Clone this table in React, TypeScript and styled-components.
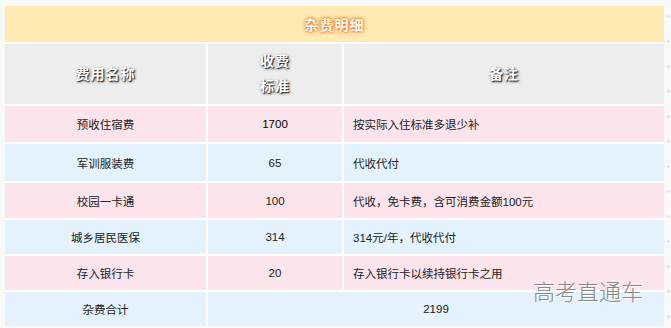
import React from 'react'
import styled, { createGlobalStyle } from 'styled-components'

const GlobalStyle = createGlobalStyle`
  body {
    margin: 0;
    background: #f9f9f9;
    font-family: 'Liberation Sans', 'Noto Sans CJK SC', sans-serif;
  }
`

const Page = styled.div`
  position: relative;
  height: 328px;
  padding: 6px 0 0 5px;
  box-sizing: border-box;
`

const Sheet = styled.div`
  display: grid;
  grid-template-columns: 201px 134px 1fr;
  gap: 2px;
  width: 659px;
  background: #fff;
`

const TitleCell = styled.div`
  grid-column: 1 / -1;
  height: 36px;
  background: #ffeab3;
  display: flex;
  align-items: center;
  justify-content: center;
  color: #fff;
  font-size: 14px;
  font-weight: 700;
  letter-spacing: 1px;
  text-shadow: 0 0 2px #ff6a00, 0 0 3px #ff7a1f, 0 0 4px #ff9a4a;
`

const HeadCell = styled.div`
  height: 60px;
  background: #ededed;
  display: flex;
  align-items: center;
  justify-content: center;
  text-align: center;
  color: #fff;
  font-size: 14px;
  font-weight: 700;
  letter-spacing: 1px;
  line-height: 25px;
  text-shadow: 1px 1px 1px #333, 1px 1px 3px #555;
`

const Cell = styled.div<{ $tone: 'pink' | 'blue'; $align?: 'left' | 'center'; $h: number; $span?: boolean }>`
  height: ${p => p.$h}px;
  background: ${p => (p.$tone === 'pink' ? '#fce4ec' : '#e3f2fd')};
  display: flex;
  align-items: center;
  justify-content: ${p => (p.$align === 'left' ? 'flex-start' : 'center')};
  padding: ${p => (p.$align === 'left' ? '0 0 0 9px' : '0')};
  grid-column: ${p => (p.$span ? '2 / -1' : 'auto')};
  color: #222;
  font-size: 11.5px;
`

const Amount = styled.span<{ $strong?: boolean }>`
  color: ${p => (p.$strong ? '#000' : '#222')};
`

const Watermark = styled.div`
  position: absolute;
  left: 533px;
  top: 274px;
  color: #888;
  font-family: 'Noto Sans CJK SC', sans-serif;
  font-size: 22px;
  font-weight: 300;
  text-shadow: 1px 1px 1px #fff;
`

const EdgeDots = styled.div`
  position: absolute;
  left: 667px;
  top: 0;
  width: 3px;
  height: 328px;
  background-image: radial-gradient(circle, #e2e2e2 1px, transparent 1.5px);
  background-size: 3px 25px;
  background-position: 0 4px;
`

const rows = [
  { name: '预收住宿费', amount: '1700', note: '按实际入住标准多退少补', tone: 'pink', h: 36, strong: true },
  { name: '军训服装费', amount: '65', note: '代收代付', tone: 'blue', h: 37 },
  { name: '校园一卡通', amount: '100', note: '代收，免卡费，含可消费金额100元', tone: 'pink', h: 35 },
  { name: '城乡居民医保', amount: '314', note: '314元/年，代收代付', tone: 'blue', h: 34 },
  { name: '存入银行卡', amount: '20', note: '存入银行卡以续持银行卡之用', tone: 'pink', h: 34 },
] as const

export default function App() {
  return (
    <>
      <GlobalStyle />
      <Page>
        <Sheet>
          <TitleCell>杂费明细</TitleCell>
          <HeadCell>费用名称</HeadCell>
          <HeadCell>
            收费
            <br />
            标准
          </HeadCell>
          <HeadCell>备注</HeadCell>
          {rows.map(r => (
            <React.Fragment key={r.name}>
              <Cell $tone={r.tone} $h={r.h}>
                {r.name}
              </Cell>
              <Cell $tone={r.tone} $h={r.h}>
                <Amount $strong={'strong' in r}>{r.amount}</Amount>
              </Cell>
              <Cell $tone={r.tone} $h={r.h} $align="left">
                {r.note}
              </Cell>
            </React.Fragment>
          ))}
          <Cell $tone="blue" $h={34}>
            杂费合计
          </Cell>
          <Cell $tone="blue" $h={34} $span>
            2199
          </Cell>
        </Sheet>
        <Watermark>高考直通车</Watermark>
        <EdgeDots />
      </Page>
    </>
  )
}
